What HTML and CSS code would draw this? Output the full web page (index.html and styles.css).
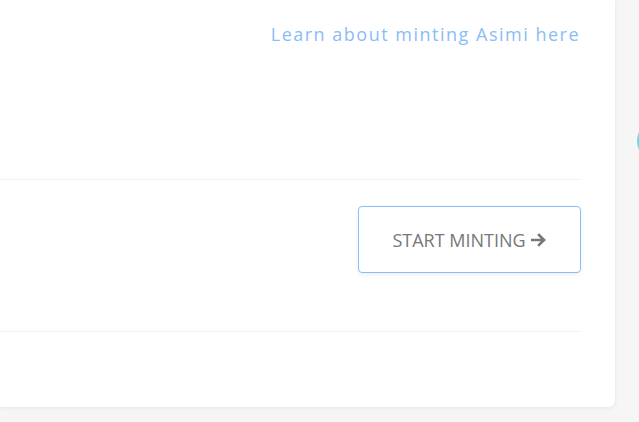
FILE: index.html
```html
<!DOCTYPE html>
<html>
<head>
<meta charset="utf-8">
<link rel="stylesheet" href="styles.css">
</head>
<body>
<div class="page">
  <div class="card">
    <div class="top">
      <a class="learn" href="#">Learn about minting Asimi here</a>
    </div>
    <div class="action">
      <button class="start">START MINTING
        <svg class="arrow" width="16" height="14" viewBox="0 0 16 14"><path d="M1 7H13M8 2L13 7L8 12" fill="none" stroke="#777" stroke-width="2.6" stroke-linecap="square" stroke-linejoin="miter"/></svg>
      </button>
    </div>
    <div class="bottom"></div>
  </div>
  <div class="side"><span class="dot"></span></div>
</div>
</body>
</html>
```
FILE: styles.css
```css
html, body {
  margin: 0;
  padding: 0;
  background: #f6f6f6;
  font-family: "Open Sans", "Liberation Sans", sans-serif;
}
.page {
  display: flex;
  width: 639px;
  height: 422px;
  overflow: hidden;
}
.card {
  width: 615px;
  height: 407px;
  flex: none;
  background: #fff;
  border-radius: 0 0 7px 0;
  box-shadow: 0 1px 4px rgba(0,0,0,0.07);
  padding-right: 35px;
  box-sizing: border-box;
  display: flex;
  flex-direction: column;
}
.top {
  height: 180px;
  border-bottom: 1px solid #f2f2f2;
  display: flex;
  justify-content: flex-end;
  align-items: flex-start;
  padding-top: 20px;
  box-sizing: border-box;
}
.learn {
  color: #8bbdf6;
  font-size: 18px;
  letter-spacing: 1.5px;
  text-decoration: none;
  line-height: 28px;
}
.action {
  height: 152px;
  border-bottom: 1px solid #f2f2f2;
  box-sizing: border-box;
  display: flex;
  justify-content: flex-end;
  align-items: flex-start;
  padding-top: 26px;
}
.start {
  width: 223px;
  height: 67px;
  margin-right: -1px;
  background: #fff;
  border: 1px solid #88bff4;
  border-radius: 4px;
  box-shadow: 0 2px 5px rgba(0,0,0,0.06);
  color: #777;
  font-family: "Open Sans", "Liberation Sans", sans-serif;
  font-size: 18px;
  display: flex;
  align-items: center;
  justify-content: center;
  gap: 5px;
  padding: 0;
}
.arrow { display: block; }
.side {
  flex: 1;
  position: relative;
}
.dot {
  position: absolute;
  left: 22px;
  top: 121px;
  width: 40px;
  height: 40px;
  border-radius: 50%;
  background: #5de0ea;
}
```
